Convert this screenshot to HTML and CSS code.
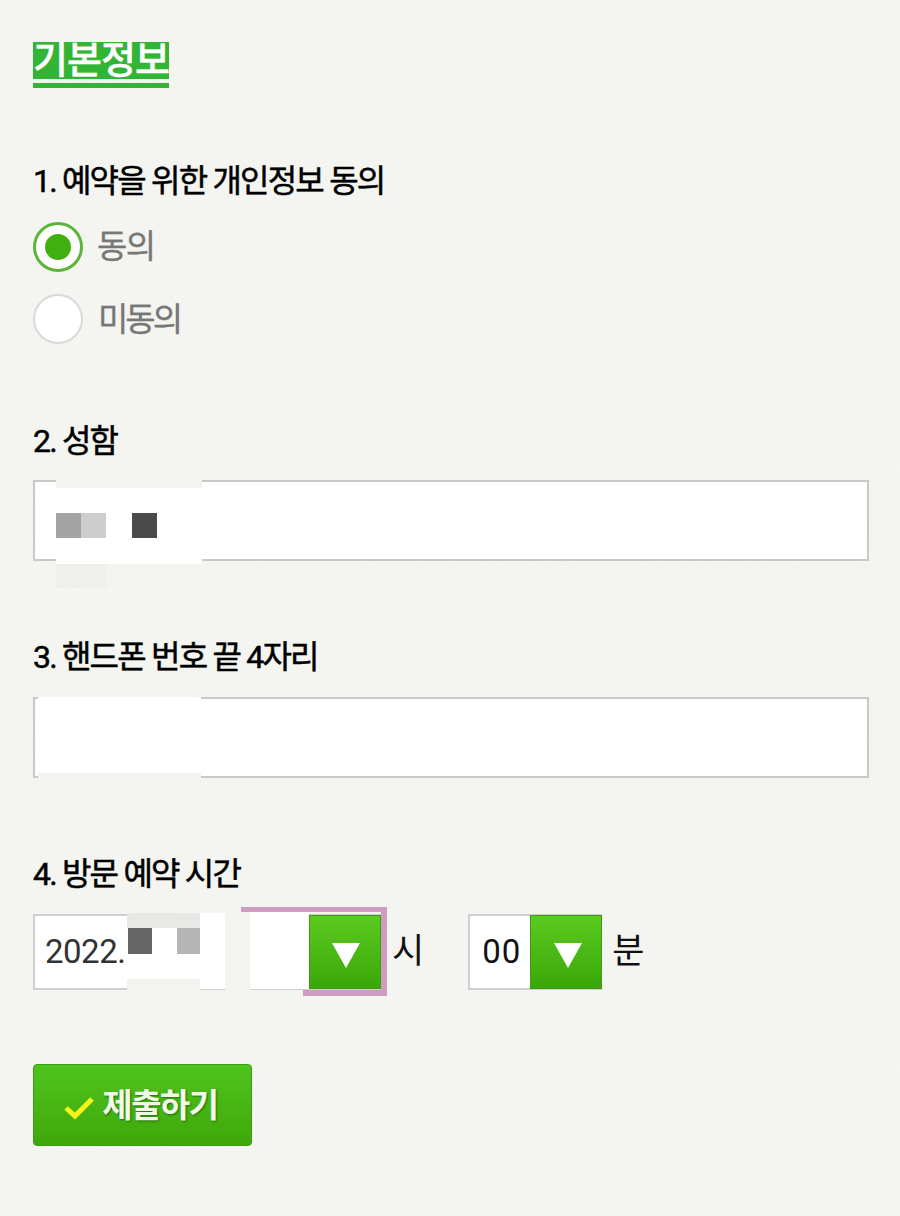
FILE: index.html
```html
<!DOCTYPE html>
<html lang="ko">
<head>
    <meta charset="UTF-8">
    <meta name="viewport" content="width=device-width, initial-scale=1.0">
    <title>기본정보</title>
    <link rel="stylesheet" href="styles.css">
</head>
<body>
    <form class="form-page">
        <h2 class="page-title"><span>기본정보</span></h2>

        <div class="field field-agree">
            <div class="field-label">1. 예약을 위한 개인정보 동의</div>
            <div class="radio-row">
                <span class="radio radio-on"></span>
                <span class="radio-text">동의</span>
            </div>
            <div class="radio-row">
                <span class="radio"></span>
                <span class="radio-text radio-text-2">미동의</span>
            </div>
        </div>

        <div class="field field-name">
            <div class="field-label">2. 성함</div>
            <div class="text-input">
                <div class="blur blur-name-top"></div>
                <div class="blur blur-name">
                    <i class="px px-a"></i><i class="px px-b"></i><i class="px px-c"></i>
                </div>
                <div class="blur blur-name-bottom"></div>
            </div>
        </div>

        <div class="field field-phone">
            <div class="field-label">3. 핸드폰 번호 끝 4자리</div>
            <div class="text-input">
                <div class="blur blur-phone"></div>
                <div class="blur blur-phone-bottom"></div>
            </div>
        </div>

        <div class="field field-time">
            <div class="field-label">4. 방문 예약 시간</div>
            <div class="time-row">
                <div class="select select-hour">
                    <span class="select-value">2022.</span>
                    <div class="select-btn"><span class="arrow"></span></div>
                    <div class="blur blur-date-top"></div>
                    <div class="blur blur-date-mid"><i class="px px-d"></i><i class="px px-e"></i></div>
                    <div class="blur blur-date-low"></div>
                    <div class="blur blur-date-white"></div>
                    <div class="blur blur-date-gap"></div>
                    <div class="blur blur-date-end"></div>
                    <div class="mark-box"></div>
                    <div class="mark-bottom"></div>
                </div>
                <span class="unit unit-hour">시</span>
                <div class="select select-min">
                    <span class="select-value">00</span>
                    <div class="select-btn"><span class="arrow"></span></div>
                </div>
                <span class="unit unit-min">분</span>
            </div>
        </div>

        <button type="button" class="submit-btn">
            <svg class="check" width="32" height="26" viewBox="0 0 32 26"><path d="M3 14l9 8L29 5" fill="none" stroke="#f4f41c" stroke-width="5"/></svg>
            <span>제출하기</span>
        </button>
    </form>
</body>
</html>
```

FILE: styles.css
```css
body {
    margin: 0;
    background-color: #f6f7f3;
    background-image: url("data:image/svg+xml,%3Csvg xmlns='http://www.w3.org/2000/svg' width='300' height='300'%3E%3Cfilter id='n'%3E%3CfeTurbulence type='fractalNoise' baseFrequency='0.45' numOctaves='2'/%3E%3CfeColorMatrix values='0 0 0 0 0.4 0 0 0 0 0.4 0 0 0 0 0.35 0.05 0 0 0 0'/%3E%3C/filter%3E%3Crect width='300' height='300' filter='url(%23n)'/%3E%3C/svg%3E");
    font-family: Roboto, "Noto Sans CJK KR", sans-serif;
    color: #000;
}

.form-page {
    padding: 42px 31px 0 33px;
}

.page-title {
    display: inline-block;
    margin: 0;
    padding-bottom: 4px;
    border-bottom: 5px solid #32b534;
    font-size: 38px;
    font-weight: 500;
    letter-spacing: -1px;
    line-height: 37px;
}

.page-title span {
    display: block;
    background-color: #32b534;
    color: #fff;
    -webkit-text-stroke: 0.4px #fff;
}

.field-label {
    font-size: 32px;
    line-height: 40px;
    font-weight: 400;
    letter-spacing: -1.8px;
    -webkit-text-stroke: 0.5px #000;
}

.field-agree {
    margin-top: 73px;
}

.field-name {
    margin-top: 77px;
}

.field-phone {
    margin-top: 76px;
}

.field-time {
    margin-top: 76px;
}

.radio-row {
    display: flex;
    align-items: center;
    height: 50px;
    margin-top: 22px;
}

.field-label + .radio-row {
    margin-top: 21px;
}

.radio {
    width: 50px;
    height: 50px;
    box-sizing: border-box;
    border: 2px solid #d9d9d9;
    border-radius: 50%;
    background-color: #fff;
    position: relative;
}

.radio-on {
    border: 3px solid #5ab53a;
}

.radio-on::after {
    content: "";
    position: absolute;
    top: 9px;
    left: 9px;
    width: 26px;
    height: 26px;
    border-radius: 50%;
    background-color: #40b010;
}

.radio-text {
    margin-left: 14px;
    margin-bottom: 6px;
    font-size: 33px;
    letter-spacing: -1.5px;
    color: #777;
    -webkit-text-stroke: 0.3px #777;
}

.radio-text-2 {
    margin-left: 15px;
    margin-bottom: 5px;
    letter-spacing: -3px;
}

.text-input {
    position: relative;
    height: 81px;
    margin-top: 20px;
    box-sizing: border-box;
    border: 2px solid #c8c8c8;
    background-color: #fff;
}

.field-name .text-input {
    margin-top: 19px;
}

.blur {
    position: absolute;
}

.blur-name-top {
    left: 21px;
    top: -13px;
    width: 146px;
    height: 19px;
    background-color: #f3f4f0;
}

.blur-name {
    left: 21px;
    top: 6px;
    width: 146px;
    height: 76px;
    background-color: #fff;
}

.blur-name-bottom {
    left: 21px;
    top: 82px;
    width: 146px;
    height: 24px;
    background: linear-gradient(to right, #eff0ec 50px, #f3f4f0 50px);
}

.blur-phone {
    left: 3px;
    top: -2px;
    width: 163px;
    height: 76px;
    background-color: #fff;
}

.blur-phone-bottom {
    left: 3px;
    top: 74px;
    width: 163px;
    height: 52px;
    background-color: #f3f4f0;
}

.px {
    position: absolute;
    display: block;
    width: 25px;
    height: 25px;
}

.px-a {
    left: 0;
    top: 25px;
    background-color: #a3a3a3;
}

.px-b {
    left: 25px;
    top: 25px;
    background-color: #cdcdcd;
}

.px-c {
    left: 76px;
    top: 25px;
    background-color: #4a4a4a;
}

.px-d {
    left: 1px;
    top: 0;
    width: 24px;
    height: 26px;
    background-color: #666;
}

.px-e {
    left: 50px;
    top: 0;
    width: 23px;
    height: 26px;
    background-color: #b5b5b5;
}

.time-row {
    display: flex;
    align-items: center;
    margin-top: 20px;
}

.select {
    position: relative;
    display: flex;
    height: 76px;
    box-sizing: border-box;
    border: 2px solid #cfcfcf;
    background-color: #fff;
}

.select-hour {
    width: 350px;
}

.select-min {
    width: 134px;
    margin-left: 44px;
}

.select-value {
    flex: 1;
    padding-left: 10px;
    font-size: 33px;
    line-height: 72px;
    color: #333;
    letter-spacing: -0.5px;
    overflow: hidden;
}

.select-min .select-value {
    padding-left: 12px;
    color: #111;
    letter-spacing: 1px;
}

.select-btn {
    display: flex;
    align-items: center;
    justify-content: center;
    width: 72px;
    margin: -1px -2px -1px 0;
    box-sizing: border-box;
    border: 1px solid #3c9c12;
    background: linear-gradient(#5ccb1f, #3aa70a);
}

.select-hour .select-btn {
    margin-right: 0;
}

.arrow {
    width: 0;
    height: 0;
    margin: 6px 0 0 2px;
    border-left: 14px solid transparent;
    border-right: 14px solid transparent;
    border-top: 25px solid #fff;
}

.select-min .arrow {
    margin-left: 4px;
}

.blur-date-top {
    left: 92px;
    top: -3px;
    width: 73px;
    height: 15px;
    background-color: #e8e8e6;
}

.blur-date-mid {
    left: 92px;
    top: 12px;
    width: 73px;
    height: 51px;
    background-color: #fff;
}

.blur-date-low {
    left: 92px;
    top: 63px;
    width: 73px;
    height: 26px;
    background-color: #f3f4f0;
}

.blur-date-white {
    left: 165px;
    top: -3px;
    width: 25px;
    height: 76px;
    background-color: #fff;
}

.blur-date-gap {
    left: 190px;
    top: -4px;
    width: 25px;
    height: 78px;
    background-color: #f3f4f0;
}

.blur-date-end {
    left: 215px;
    top: -4px;
    width: 59px;
    height: 77px;
    background-color: #fff;
}

.mark-box {
    position: absolute;
    left: 206px;
    top: -9px;
    width: 146px;
    height: 83px;
    box-sizing: border-box;
    border-top: 5px solid #d09bc0;
    border-right: 6px solid #d09bc0;
}

.mark-bottom {
    position: absolute;
    left: 268px;
    top: 74px;
    width: 84px;
    height: 6px;
    background-color: #d09bc0;
}

.unit {
    font-size: 35px;
    line-height: 76px;
    color: #111;
}

.unit-hour {
    margin-left: 9px;
}

.unit-min {
    margin-left: 10px;
}

.submit-btn {
    display: flex;
    align-items: center;
    justify-content: center;
    gap: 7px;
    width: 219px;
    height: 82px;
    margin-top: 74px;
    padding: 0 4px 4px 0;
    border: 1px solid #3c9a17;
    border-radius: 4px;
    background: linear-gradient(#4fc41d, #3fa80a);
    color: #f1f8e8;
    font-family: inherit;
    font-size: 33px;
    font-weight: 700;
    letter-spacing: -1.5px;
    text-shadow: 1px 1px 2px rgba(0, 60, 0, 0.6);
}

.check {
    margin-top: 8px;
}
```
